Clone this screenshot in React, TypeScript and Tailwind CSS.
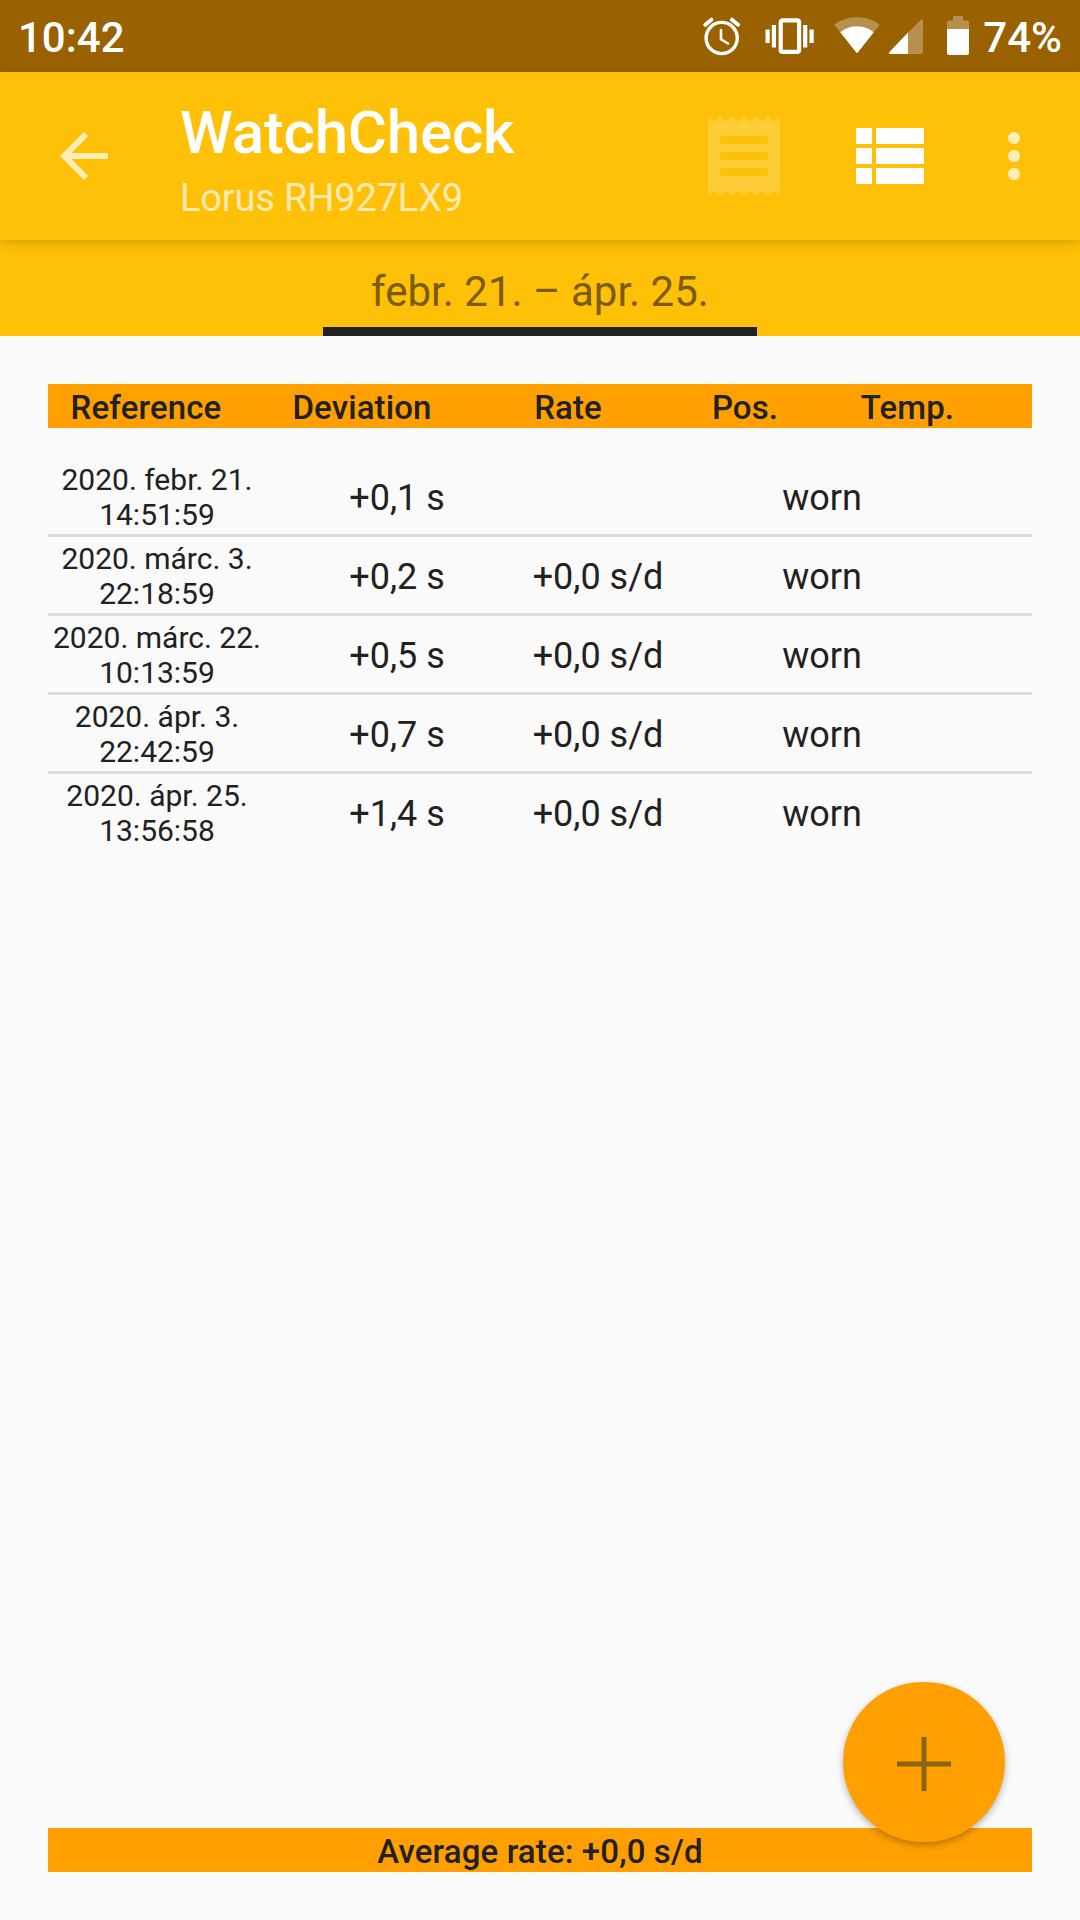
import type { ReactNode } from "react";

type Measurement = {
  date: string;
  time: string;
  deviation: string;
  rate: string;
  position: string;
};

const measurements: Measurement[] = [
  { date: "2020. febr. 21.", time: "14:51:59", deviation: "+0,1 s", rate: "", position: "worn" },
  { date: "2020. márc. 3.", time: "22:18:59", deviation: "+0,2 s", rate: "+0,0 s/d", position: "worn" },
  { date: "2020. márc. 22.", time: "10:13:59", deviation: "+0,5 s", rate: "+0,0 s/d", position: "worn" },
  { date: "2020. ápr. 3.", time: "22:42:59", deviation: "+0,7 s", rate: "+0,0 s/d", position: "worn" },
  { date: "2020. ápr. 25.", time: "13:56:58", deviation: "+1,4 s", rate: "+0,0 s/d", position: "worn" },
];

function Icon({ className, children }: { className: string; children: ReactNode }) {
  return (
    <svg viewBox="0 0 24 24" fill="currentColor" className={className}>
      {children}
    </svg>
  );
}

function StatusBar() {
  return (
    <div className="flex h-[72px] items-center justify-between bg-[#996100] pr-[18px] pl-[18px] text-[42px] leading-[72px] font-medium text-white">
      <span className="pt-1">10:42</span>

      <div className="flex h-full items-center">
        {/* alarm */}
        <svg viewBox="0 0 40 40" fill="none" stroke="currentColor" strokeLinecap="round" className="mr-[23px] h-10 w-10">
          <circle cx="19.7" cy="22" r="15.6" strokeWidth="3.4" />
          <path d="M19 14v9.3l7 4.2" strokeWidth="2.6" />
          <path d="M3.3 8.7 9.4 3.7M36.1 8.7l-6.1-5" strokeWidth="4" />
        </svg>

        {/* vibrate */}
        <svg viewBox="0 0 50 40" fill="none" stroke="currentColor" className="mr-[19px] h-10 w-[50px]">
          <rect x="15.7" y="4.3" width="18.4" height="31.6" rx="2" strokeWidth="4.2" />
          <path d="M2.6 13.5v13.6M46.6 13.5v13.6" strokeWidth="4.2" />
          <path d="M8.9 9v22.6M40.2 9v22.6" strokeWidth="4.2" />
        </svg>

        {/* wifi */}
        <svg viewBox="0 0 46 40" fill="currentColor" className="mr-2 h-10 w-[46px]">
          <path d="M0.3 8.8C12 -1.2 34 -1.2 45.7 8.8L39.8 16.2C30.5 8.4 15.5 8.4 6.2 16.2Z" opacity="0.3" />
          <path d="M6.2 16.2C15.5 8.4 30.5 8.4 39.8 16.2L24.2 36Q23 37.8 21.8 36Z" />
        </svg>

        {/* mobile signal */}
        <svg viewBox="0 0 36 40" fill="currentColor" className="mr-[23px] h-10 w-9">
          <path d="M32.5 4.3Q35 2 35 5v31q0 2-2 2H20V16.6Z" opacity="0.3" />
          <path d="M20 16.6V38H2q-2 0-.6-2Z" />
        </svg>

        {/* battery */}
        <svg viewBox="0 0 22 40" fill="currentColor" className="mr-[14px] h-10 w-[22px]">
          <path d="M6 0h10v4.5h4q2 0 2 2V13H0V6.5q0-2 2-2h4Z" opacity="0.3" />
          <path d="M0 13h22v24q0 2-2 2H2q-2 0-2-2Z" />
        </svg>

        <span className="pt-1">74%</span>
      </div>
    </div>
  );
}

function Toolbar() {
  return (
    <header className="relative z-10 flex h-[168px] items-center bg-[#ffc107] pr-[30px] pl-12 text-white shadow-[0_3px_12px_rgba(0,0,0,0.17)]">
      <button>
        <Icon className="h-[72px] w-[72px] text-white/70">
          <path d="M20 11H7.83l5.59-5.59L12 4l-8 8 8 8 1.41-1.41L7.83 13H20v-2z" />
        </Icon>
      </button>

      <div className="ml-[60px] flex-1 pt-[14px]">
        <h1 className="text-[60px] leading-[70px] font-medium tracking-[-0.2px]">WatchCheck</h1>
        <p className="text-[38px] leading-[61px] tracking-[-0.16px] text-white/70">Lorus RH927LX9</p>
      </div>

      <button>
        <Icon className="h-24 w-24 text-white/20">
          <path d="M18 17H6v-2h12v2zm0-4H6v-2h12v2zm0-4H6V7h12v2zM3 22l1.5-1.5L6 22l1.5-1.5L9 22l1.5-1.5L12 22l1.5-1.5L15 22l1.5-1.5L18 22l1.5-1.5L21 22V2l-1.5 1.5L18 2l-1.5 1.5L15 2l-1.5 1.5L12 2l-1.5 1.5L9 2 7.5 3.5 6 2 4.5 3.5 3 2v20z" />
        </Icon>
      </button>

      <button className="ml-12">
        <Icon className="h-24 w-24">
          <path d="M4 14h4v-4H4v4zm0 5h4v-4H4v4zM4 9h4V5H4v4zm5 5h12v-4H9v4zm0 5h12v-4H9v4zM9 5v4h12V5H9z" />
        </Icon>
      </button>

      <button className="ml-[42px]">
        <Icon className="h-[72px] w-[72px] text-white/70">
          <path d="M12 8c1.1 0 2-.9 2-2s-.9-2-2-2-2 .9-2 2 .9 2 2 2zm0 2c-1.1 0-2 .9-2 2s.9 2 2 2 2-.9 2-2-.9-2-2-2zm0 6c-1.1 0-2 .9-2 2s.9 2 2 2 2-.9 2-2-.9-2-2-2z" />
        </Icon>
      </button>
    </header>
  );
}

function PeriodTab() {
  return (
    <nav className="flex h-24 justify-center bg-[#ffc107]">
      <button className="w-[434px] border-b-9 border-[#212121] pt-[16px] text-[42px] leading-[71px] text-[#795c05]">
        febr. 21. – ápr. 25.
      </button>
    </nav>
  );
}

function MeasurementTable() {
  return (
    <section className="flex-1 text-center text-[#212121]">
      <div className="flex h-11 bg-[#ffa000] text-[33px] leading-[48px] font-medium tracking-[0.12px]">
        <span className="w-[196px]">Reference</span>
        <span className="w-[236px]">Deviation</span>
        <span className="w-[176px]">Rate</span>
        <span className="w-[178px]">Pos.</span>
        <span className="w-[147px]">Temp.</span>
      </div>

      <div className="mt-[30px] divide-y-3 divide-[#dcdcdc]">
        {measurements.map((m) => (
          <div key={m.date} className="flex h-[79px] items-center text-[36px] last:h-[76px]">
            <div className="w-[218px] pt-0.5 text-[30px] leading-[35px] whitespace-nowrap">
              <div>{m.date}</div>
              <div>{m.time}</div>
            </div>
            <span className="w-[262px] pt-1">{m.deviation}</span>
            <span className="w-[140px] pt-1">{m.rate}</span>
            <span className="w-[308px] pt-1">{m.position}</span>
          </div>
        ))}
      </div>
    </section>
  );
}

export default function App() {
  return (
    <div className="relative flex h-[1920px] w-[1080px] flex-col overflow-hidden bg-[#fafafa] font-['Roboto',sans-serif]">
      <StatusBar />
      <Toolbar />
      <PeriodTab />

      <main className="flex flex-1 flex-col px-12 py-12">
        <MeasurementTable />
        <footer className="h-11 bg-[#ffa000] text-center text-[33px] leading-[48px] font-medium tracking-[0.12px] text-[#212121]">
          Average rate: +0,0 s/d
        </footer>
      </main>

      {/* floating add button */}
      <button className="absolute right-[75px] bottom-[78px] flex h-[160px] w-[162px] items-center justify-center rounded-full bg-[#ffa000] pt-[3px] shadow-[0_3px_7px_rgba(0,0,0,0.28)]">
        <svg viewBox="0 0 54 54" stroke="#8b6415" strokeWidth="5" className="h-[54px] w-[54px]">
          <path d="M27 0v54M0 27h54" />
        </svg>
      </button>
    </div>
  );
}
